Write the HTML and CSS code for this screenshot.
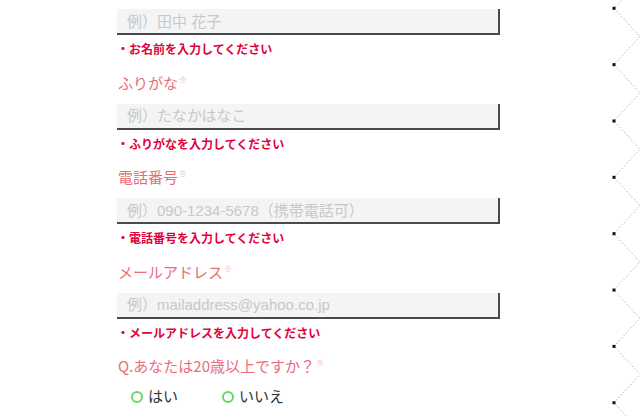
FILE: index.html
```html
<!DOCTYPE html>
<html lang="ja">
<head>
<meta charset="utf-8">
<link rel="stylesheet" href="styles.css">
</head>
<body>
<div class="page">
  <form class="form">
    <div class="field field-first">
      <input class="text-input" type="text" placeholder="例）田中 花子">
      <p class="error">・お名前を入力してください</p>
    </div>
    <div class="field">
      <label class="label">ふりがな<span class="req">※</span></label>
      <input class="text-input" type="text" placeholder="例）たなかはなこ">
      <p class="error">・ふりがなを入力してください</p>
    </div>
    <div class="field">
      <label class="label">電話番号<span class="req">※</span></label>
      <input class="text-input" type="text" placeholder="例）090-1234-5678（携帯電話可）">
      <p class="error">・電話番号を入力してください</p>
    </div>
    <div class="field">
      <label class="label">メールアドレス<span class="req">※</span></label>
      <input class="text-input" type="text" placeholder="例）mailaddress@yahoo.co.jp">
      <p class="error">・メールアドレスを入力してください</p>
    </div>
    <div class="field">
      <div class="label">Q.あなたは20歳以上ですか？<span class="req">※</span></div>
      <div class="radios">
        <label class="option"><span class="circle"></span>はい</label>
        <label class="option"><span class="circle"></span>いいえ</label>
      </div>
    </div>
  </form>
  <aside class="zigzag">
    <svg width="28" height="417" viewBox="0 0 28 417">
      <polyline fill="none" stroke="#b5b5b5" stroke-width="1" stroke-dasharray="1.5 2"
        points="28,-19.875 2,8.3 28,36.475 2,64.65 28,92.825 2,121 28,149.175 2,177.35 28,205.525 2,233.7 28,261.875 2,290.05 28,318.225 2,346.4 28,374.575 2,402.75 28,430.925"/>
      <g fill="#111">
        <rect x="0.5" y="6.8" width="3" height="3"/>
        <rect x="0.5" y="63.15" width="3" height="3"/>
        <rect x="0.5" y="119.5" width="3" height="3"/>
        <rect x="0.5" y="175.85" width="3" height="3"/>
        <rect x="0.5" y="232.2" width="3" height="3"/>
        <rect x="0.5" y="288.55" width="3" height="3"/>
        <rect x="0.5" y="344.9" width="3" height="3"/>
        <rect x="0.5" y="401.25" width="3" height="3"/>
      </g>
    </svg>
  </aside>
</div>
</body>
</html>
```
FILE: styles.css
```css
html, body {
  margin: 0;
  padding: 0;
  background: #fff;
  height: 417px;
  overflow: hidden;
}
body {
  font-family: "Noto Sans CJK JP", "Liberation Sans", sans-serif;
}
.page {
  display: flex;
  height: 417px;
}
.form {
  margin-left: 117px;
  width: 383px;
  padding-top: 9px;
}
.field {
  display: flex;
  flex-direction: column;
  margin-bottom: 15.5px;
}
.label {
  display: block;
  font-size: 15px;
  line-height: 20px;
  height: 20px;
  color: #ea6c7b;
  padding-left: 1px;
  margin-bottom: 11px;
  white-space: nowrap;
}
.req {
  font-size: 8px;
  line-height: 8px;
  vertical-align: top;
  color: #f4a9b2;
  margin-left: 1px;
  position: relative;
  top: 3px;
}
.text-input {
  box-sizing: border-box;
  width: 383px;
  height: 26px;
  margin: 0;
  padding: 0 0 0 10px;
  border: none;
  border-right: 2px solid #4a4a4a;
  border-bottom: 2px solid #4a4a4a;
  background: #f4f4f4;
  font-family: "Liberation Sans", "Noto Sans CJK JP", sans-serif;
  font-size: 15px;
  outline: none;
}
.text-input::placeholder {
  color: #c8c8c8;
}
.error {
  margin: 6px 0 0;
  font-size: 12px;
  line-height: 16px;
  height: 16px;
  font-weight: bold;
  color: #e3003b;
  white-space: nowrap;
}
.radios {
  display: flex;
  gap: 44px;
  padding-left: 14px;
  margin-top: -1px;
  font-size: 15px;
  line-height: 20px;
  color: #333;
}
.option {
  display: inline-flex;
  align-items: center;
  gap: 5px;
}
.circle {
  box-sizing: border-box;
  width: 12px;
  height: 12px;
  border: 2px solid #6ad66a;
  border-radius: 50%;
  margin-top: 2px;
}
.zigzag {
  margin-left: auto;
  width: 28px;
  height: 417px;
  flex: none;
}
.zigzag svg {
  display: block;
}
```
